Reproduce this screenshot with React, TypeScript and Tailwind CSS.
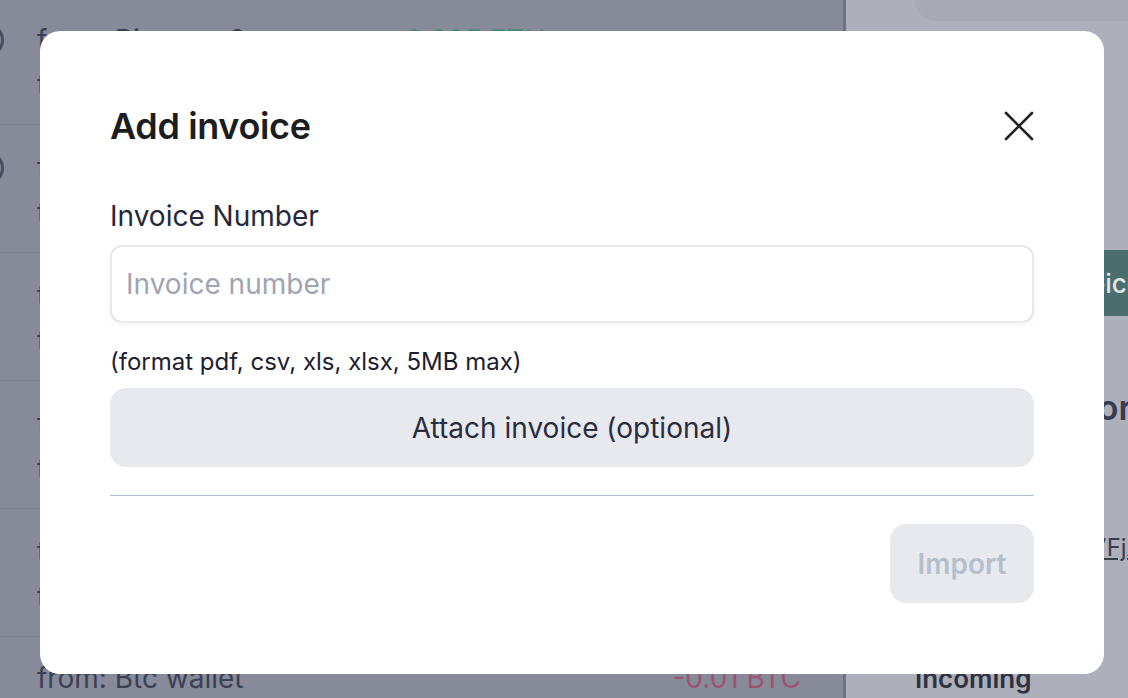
const rows = [
  { from: "from: Binance 2", to: "to: Main wallet", amount: "0.005 ETH", tone: "in", avatar: true },
  { from: "from: Main wallet", to: "to: Ledger", amount: "-0.2 ETH", tone: "out", avatar: true },
  { from: "to: Kraken", to: "to: Savings", amount: "0.3 BTC", tone: "in", avatar: false },
  { from: "from: Coinbase", to: "to: Main wallet", amount: "1.2 ETH", tone: "in", avatar: false },
  { from: "to: Binance", to: "to: Trezor", amount: "-0.5 ETH", tone: "out", avatar: false },
];

const CloseIcon = () => (
  <svg width="30" height="30" viewBox="0 0 30 30" fill="none">
    <path
      d="M2 2L28 28M28 2L2 28"
      stroke="currentColor"
      strokeWidth="2.6"
      strokeLinecap="round"
    />
  </svg>
);

const BackgroundPage = () => {
  return (
    <div className="flex h-[698px] w-[1128px] overflow-hidden font-['Inter',sans-serif]">
      {/* transactions list */}
      <div className="w-[843px] shrink-0 bg-[#878a99] -mt-[3px]">
        {rows.map((row) => (
          <div
            key={row.from + row.to}
            className="relative h-[128px] border-b border-[#7d808f] pl-[37px] pt-[27px]"
          >
            {row.avatar && (
              <div className="absolute -left-[30px] top-[26px] h-[34px] w-[34px] rounded-full border-[3px] border-[#4b4e63]" />
            )}
            <div className="flex h-[32px] items-center text-[28px] text-[#3d4054]">
              <span className="w-[368px]">{row.from}</span>
              <span
                className={
                  row.tone === "in" ? "text-[#4e8677]" : "text-[#9c5470]"
                }
              >
                {row.amount}
              </span>
            </div>
            <div className="mt-[13px] h-[32px] text-[28px] leading-[32px] text-[#3d4054]">
              {row.to}
            </div>
          </div>
        ))}
        <div className="flex h-[128px] items-start pl-[37px] pr-[42px] pt-[25px]">
          <div className="flex h-[32px] w-full items-center justify-between text-[28px]">
            <span className="text-[#3d4054]">from: Btc wallet</span>
            <span className="text-[#9c5470]">-0.01 BTC</span>
          </div>
        </div>
      </div>

      {/* details panel */}
      <div className="flex flex-1 border-l-[3px] border-[#707283] bg-[#adafba]">
        <div className="flex flex-1 flex-col pl-[69px]">
          <div className="h-[26px] rounded-bl-[22px] bg-[#a7a9b5]" />
          <div className="mt-[229px] flex h-[80px] items-center rounded-l-[14px] bg-[#4b6e6c] pl-[81px] text-[26px] font-medium whitespace-nowrap text-[#dfe6e5]">
            Add invoice
          </div>
          <div className="mt-[66px] -ml-[12px] text-[34px] font-semibold whitespace-nowrap text-[#393c4c]">
            Payment information
          </div>
          <div className="mt-[97px] pl-[109px] text-[24px] whitespace-nowrap text-[#393c4c] underline">
            0x71C7FjA9
          </div>
          <div className="mt-[93px] text-[26px] font-semibold text-[#2e3140]">
            Incoming
          </div>
        </div>
      </div>
    </div>
  );
};

const AddInvoiceModal = () => {
  return (
    <div className="absolute left-[40px] top-[31px] flex h-[643px] w-[1064px] flex-col rounded-[20px] bg-white px-[70px] pt-[73px] font-['Inter',sans-serif]">
      <div className="flex h-[44px] items-center justify-between">
        <h2 className="text-[36px] font-semibold tracking-[-0.01em] text-[#1d1d21]">
          Add invoice
        </h2>
        <button className="text-[#222226]">
          <CloseIcon />
        </button>
      </div>

      <label className="mt-[52px] h-[32px] text-[28px] leading-[32px] text-[#25273a]">
        Invoice Number
      </label>
      <input
        placeholder="Invoice number"
        className="mt-[13px] h-[78px] w-full rounded-[12px] border-2 border-[#e7e7ee] px-[14px] text-[28px] text-[#25273a] shadow-[0_2px_6px_rgba(20,20,40,0.05)] outline-none placeholder:text-[#a0a4b3]"
      />

      <p className="mt-[25px] h-[28px] text-[24px] leading-[28px] text-[#1e2030]">
        (format pdf, csv, xls, xlsx, 5MB max)
      </p>
      <button className="mt-[12px] h-[79px] w-full rounded-[16px] bg-[#e8e9ef] text-[28px] text-[#2a2d3e]">
        Attach invoice (optional)
      </button>

      <div className="mt-[28px] h-px bg-[#afbdd6]" />

      <div className="mt-[28px] flex justify-end">
        <button
          disabled
          className="h-[79px] w-[144px] rounded-[16px] bg-[#e8e9ef] text-[28px] font-semibold text-[#b5bfcc]"
        >
          Import
        </button>
      </div>
    </div>
  );
};

export default function App() {
  return (
    <div className="relative h-[698px] w-[1128px] overflow-hidden">
      <BackgroundPage />
      <AddInvoiceModal />
    </div>
  );
}
